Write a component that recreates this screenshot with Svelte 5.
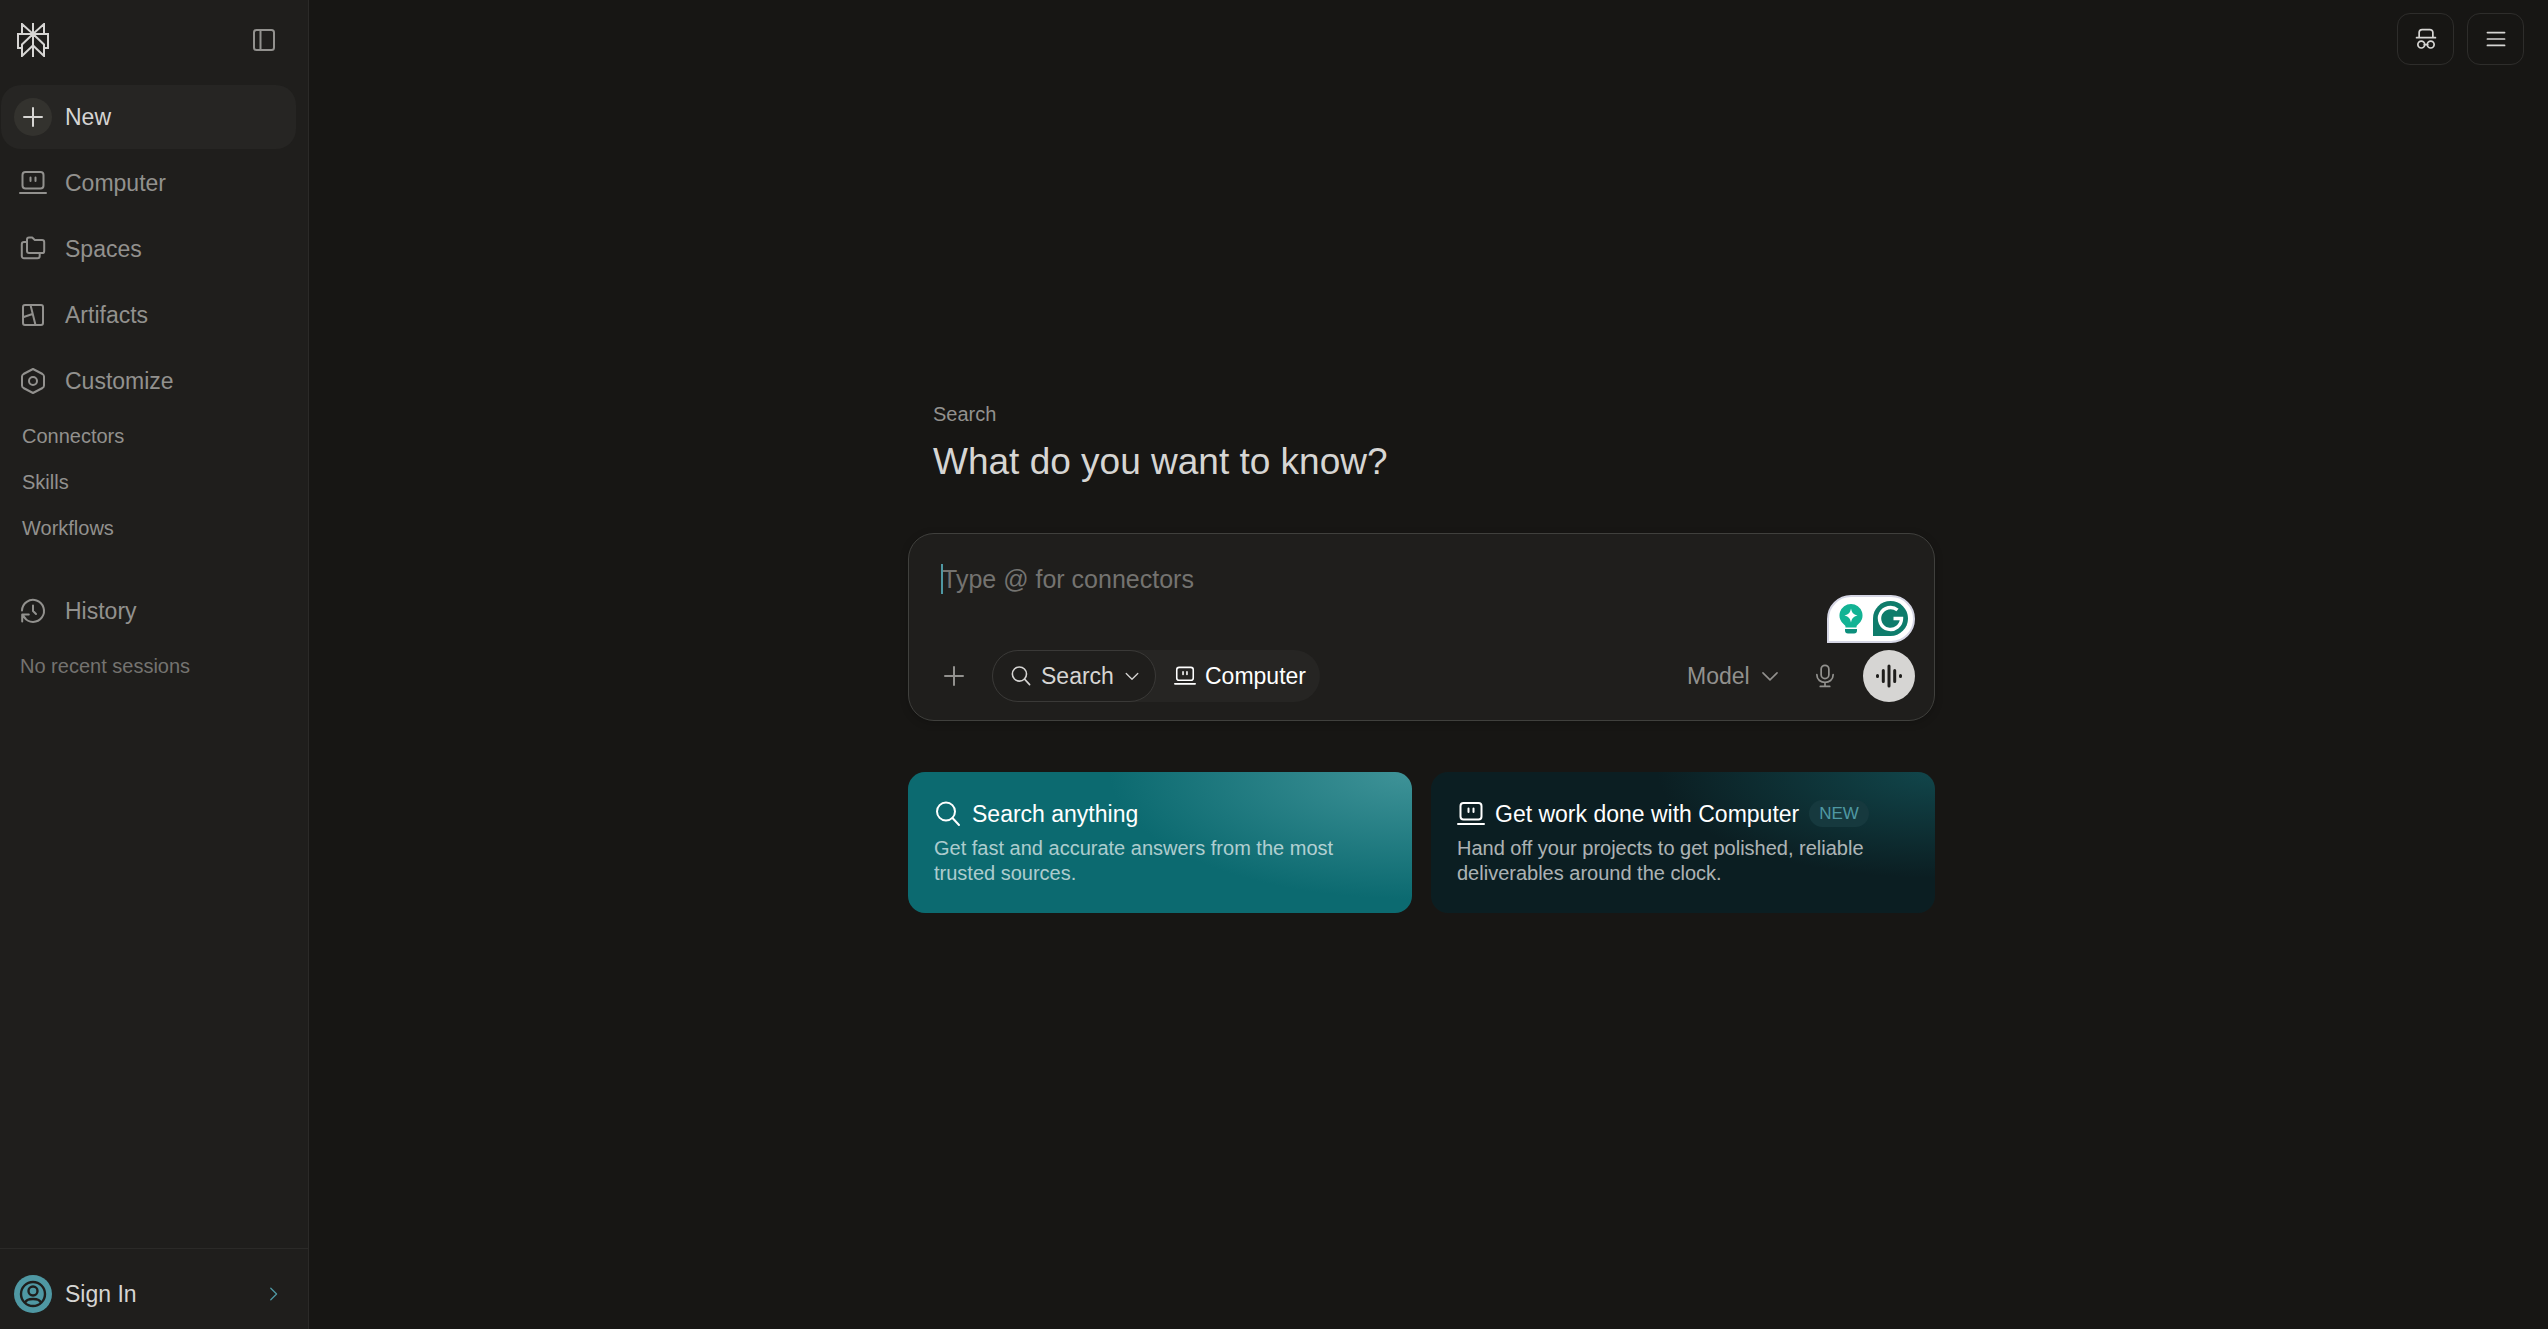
<script>
    const navItems = [
        { label: 'New', icon: 'plus', active: true },
        { label: 'Computer', icon: 'computer' },
        { label: 'Spaces', icon: 'spaces' },
        { label: 'Artifacts', icon: 'artifacts' },
        { label: 'Customize', icon: 'customize' }
    ];
    const subItems = ['Connectors', 'Skills', 'Workflows'];

    const cards = [
        {
            kind: 'search',
            icon: 'search',
            title: 'Search anything',
            text: 'Get fast and accurate answers from the most trusted sources.'
        },
        {
            kind: 'computer',
            icon: 'computer',
            title: 'Get work done with Computer',
            text: 'Hand off your projects to get polished, reliable deliverables around the clock.',
            badge: 'NEW'
        }
    ];

    let query = $state('');
    let mode = $state('Search');
    let model = $state('Model');
</script>

{#snippet icon(name, size = 28)}
    <svg class="icon" width={size} height={size} viewBox="0 0 28 28" aria-hidden="true">
        {#if name === 'plus'}
            <path d="M14 5v18M5 14h18" />
        {:else if name === 'computer'}
            <rect x="3.5" y="3" width="21" height="16.5" rx="3" />
            <path d="M1 24h26M11.5 8.5v3.5M16.5 8.5v3.5" />
        {:else if name === 'spaces'}
            <path d="M8 4.500a2 2 0 0 1 2-2h3.200l2.600 2.400H23a2.200 2.200 0 0 1 2.200 2.200v8.800a2.200 2.200 0 0 1-2.200 2.200H10a2 2 0 0 1-2-2z" />
            <path d="M8 7H5a2.200 2.200 0 0 0-2.200 2.200V21A2.200 2.200 0 0 0 5 23.300h13.500a2.200 2.200 0 0 0 2.200-2.200v-3" />
        {:else if name === 'artifacts'}
            <rect x="4" y="4" width="20" height="20" rx="2" />
            <path d="M11.500 4l5 20M4 16.200l9.500-3.200" />
        {:else if name === 'customize'}
            <path d="M14 2l9.500 5a3 3 0 0 1 1.500 2.500v9a3 3 0 0 1-1.500 2.500L14 26l-9.500-5A3 3 0 0 1 3 18.500v-9A3 3 0 0 1 4.500 7z" />
            <circle cx="14" cy="14" r="4" />
        {:else if name === 'history'}
            <path d="M3 13.500A11 11 0 1 1 5.200 20.500M3.200 24.500V17.500H9.800M3.500 17.800l3.300 4M14 8.500V14l3 3" />
        {:else if name === 'search'}
            <circle cx="12" cy="11.500" r="9" />
            <path d="M18.500 18L25 25" />
        {:else if name === 'chevron-down'}
            <path d="M5 10l9 9 9-9" />
        {:else if name === 'chevron-right'}
            <path d="M9 5l9 9-9 9" />
        {:else if name === 'panel'}
            <rect x="4" y="4" width="20" height="20" rx="2.500" />
            <path d="M10.500 4v20" />
        {:else if name === 'incognito'}
            <path d="M3 12.500h22M6 12.500V6.500A3.500 3.500 0 0 1 9.500 3h9A3.500 3.500 0 0 1 22 6.500v6M12 20.500h4" />
            <circle cx="8.500" cy="20.500" r="4" />
            <circle cx="19.500" cy="20.500" r="4" />
        {:else if name === 'menu'}
            <path d="M4 6.500h20M4 14h20M4 21.500h20" />
        {:else if name === 'mic'}
            <rect x="9.500" y="1.500" width="9" height="15.500" rx="4.500" />
            <path d="M4.500 12.500C4.500 24.500 23.500 24.500 23.500 12.500M14 21.500v4.500M8.500 26.200h11" />
        {/if}
    </svg>
{/snippet}

<div class="page">
    <aside class="sidebar">
        <div class="brand">
            <a class="logo" href="#home" aria-label="Home">
                <svg width="32" height="34" viewBox="0 0 32 34" aria-hidden="true">
                    <path d="M16 0v34M5 11V1l11 10L27 1v10M5 25H1V11h30v14h-4M16 11L5 21.500V33l11-10.500L27 33V21.500z" />
                </svg>
            </a>
            <button class="collapse" aria-label="Collapse sidebar">{@render icon('panel')}</button>
        </div>

        <nav class="nav">
            {#each navItems as item}
                <a class="nav-item" class:active={item.active} href="#{item.label}">
                    <span class="nav-icon">{@render icon(item.icon)}</span>
                    {item.label}
                </a>
            {/each}
        </nav>
        <nav class="sub-nav" aria-label="Customize">
            {#each subItems as item}
                <a href="#{item}">{item}</a>
            {/each}
        </nav>

        <section class="history">
            <a class="nav-item" href="#history">
                <span class="nav-icon">{@render icon('history')}</span>
                History
            </a>
            <p>No recent sessions</p>
        </section>

        <div class="account">
            <button class="sign-in">
                <span class="avatar">
                    <svg width="28" height="28" viewBox="0 0 28 28" aria-hidden="true">
                        <circle cx="14" cy="14" r="12" />
                        <circle cx="14" cy="11" r="4.500" />
                        <path d="M6.500 22.500c.5-3 3.500-3.500 7.500-3.500s7 .5 7.500 3.500" />
                    </svg>
                </span>
                Sign In
                <span class="go">{@render icon('chevron-right', 18)}</span>
            </button>
        </div>
    </aside>

    <main class="main">
        <header class="topbar">
            <button aria-label="Incognito">{@render icon('incognito', 24)}</button>
            <button aria-label="Menu">{@render icon('menu', 24)}</button>
        </header>

        <div class="center">
            <div class="content">
                <div class="intro">
                    <p>Search</p>
                    <h1>What do you want to know?</h1>
                </div>

                <form class="composer" onsubmit={(e) => e.preventDefault()}>
                    <div class="field">
                        <span class="caret"></span>
                        <textarea rows="1" placeholder="Type @ for connectors" aria-label="Ask anything" bind:value={query}></textarea>
                    </div>

                    <div class="toolbar">
                        <button type="button" class="add" aria-label="Add files">{@render icon('plus')}</button>
                        <div class="modes">
                            <label class="mode">
                                {@render icon('search', 22)}
                                <select aria-label="Mode" bind:value={mode}>
                                    <option>Search</option>
                                </select>
                                {@render icon('chevron-down', 18)}
                            </label>
                            <button type="button" class="computer">
                                {@render icon('computer', 22)}
                                Computer
                            </button>
                        </div>

                        <label class="model">
                            <select aria-label="Model" bind:value={model}>
                                <option>Model</option>
                            </select>
                            {@render icon('chevron-down', 22)}
                        </label>
                        <button type="button" class="mic" aria-label="Dictate">{@render icon('mic', 24)}</button>
                        <button type="button" class="voice" aria-label="Voice mode">
                            <svg width="28" height="28" viewBox="0 0 28 28" aria-hidden="true">
                                <path d="M2.500 13.500v1M8.300 8.500v11M14 4v20M19.700 8.500v11M25.500 13.500v1" />
                            </svg>
                        </button>
                    </div>

                    <!-- writing assistant, floats over the composer -->
                    <div class="assistant">
                        <svg width="24" height="30" viewBox="0 0 24 30" aria-hidden="true">
                            <path fill="#12b394" d="M12 0a11.500 11.500 0 0 0-6.500 21c1 .7 1 1.500 1 2.500h11c0-1 0-1.800 1-2.500A11.500 11.500 0 0 0 12 0z" />
                            <path fill="#0c8f7c" d="M6 25h12v1.500a3 3 0 0 1-3 3H9a3 3 0 0 1-3-3z" />
                            <path fill="#fff" d="M12 4.500c1 4.500 2 5.500 6.500 7-4.500 1.500-5.500 2.500-6.500 7-1-4.500-2-5.500-6.500-7 4.500-1.500 5.500-2.500 6.500-7z" />
                        </svg>
                        <svg width="35" height="35" viewBox="0 0 35 35" aria-hidden="true">
                            <path fill="#0e7c6b" d="M0 35V17.500A17.500 17.500 0 1 1 17.500 35z" />
                            <path class="g-mark" d="M24.500 9A11 11 0 1 0 28.500 17.500H20.500" />
                        </svg>
                    </div>
                </form>

                <div class="cards">
                    {#each cards as card}
                        <button class="card {card.kind}">
                            <span class="card-title">
                                {@render icon(card.icon)}
                                {card.title}
                                {#if card.badge}
                                    <span class="badge">{card.badge}</span>
                                {/if}
                            </span>
                            <span class="card-text">{card.text}</span>
                        </button>
                    {/each}
                </div>
            </div>
        </div>
    </main>
</div>

<style>
    :global(body) {
        background: #171614;
    }

    .page {
        display: flex;
        min-height: 100vh;
        color: #d6d5d3;
        font-family: 'Liberation Sans', Arial, sans-serif;
        font-size: 23px;
        line-height: 32px;
    }

    .page :is(button, select, textarea) {
        padding: 0;
        border: 0;
        background: none;
        color: inherit;
        font: inherit;
        appearance: none;
        outline: none;
    }

    .page a {
        color: inherit;
        text-decoration: none;
    }

    .page :is(p, h1) {
        margin: 0;
    }

    .page svg {
        display: block;
        flex-shrink: 0;
    }

    .icon {
        fill: none;
        stroke: currentColor;
        stroke-width: 2;
        stroke-linecap: round;
        stroke-linejoin: round;
    }

    /* Sidebar */
    .sidebar {
        display: flex;
        flex-direction: column;
        box-sizing: border-box;
        width: 309px;
        flex-shrink: 0;
        background: #1f1e1c;
        border-right: 1px solid #2b2a28;
        color: #92918e;
    }

    .brand {
        display: flex;
        align-items: center;
        justify-content: space-between;
        height: 79px;
        padding: 0 30px 0 17px;
        margin-bottom: 6px;
    }

    .logo path {
        fill: none;
        stroke: #d6d5d3;
        stroke-width: 2;
    }

    .nav {
        display: grid;
        gap: 2px;
    }

    .nav-item {
        display: flex;
        align-items: center;
        gap: 13px;
        height: 64px;
        margin: 0 12px 0 1px;
        padding: 0 13px;
        border-radius: 20px;
    }

    .nav-icon {
        display: grid;
        place-items: center;
        width: 38px;
        height: 38px;
        border-radius: 50%;
    }

    .nav-item.active {
        background: #262523;
        color: #d6d5d3;
    }

    .nav-item.active .nav-icon {
        background: #33322e;
    }

    .sub-nav {
        display: grid;
        font-size: 20px;
        line-height: 46px;
    }

    .sub-nav a {
        padding-left: 22px;
    }

    .history {
        margin-top: 28px;
    }

    .history p {
        padding-left: 20px;
        color: #747370;
        font-size: 20px;
        line-height: 46px;
    }

    .account {
        margin-top: auto;
        border-top: 1px solid #2b2a28;
    }

    .page .sign-in {
        display: flex;
        align-items: center;
        gap: 13px;
        width: 100%;
        height: 80px;
        padding: 10px 25px 0 14px;
        color: #d6d5d3;
    }

    .avatar {
        display: grid;
        place-items: center;
        width: 38px;
        height: 38px;
        border-radius: 50%;
        background: #4f98a3;
    }

    .avatar svg {
        fill: none;
        stroke: #1f1e1c;
        stroke-width: 2.4;
    }

    .go {
        margin-left: auto;
        color: #4f98a3;
    }

    /* Main column */
    .main {
        display: flex;
        flex: 1;
        flex-direction: column;
        min-width: 0;
    }

    .topbar {
        display: flex;
        justify-content: flex-end;
        gap: 13px;
        padding: 13px 24px;
    }

    .page .topbar button {
        display: grid;
        place-items: center;
        width: 57px;
        height: 52px;
        border: 1px solid #2e2d2b;
        border-radius: 13px;
    }

    .center {
        display: flex;
        flex: 1;
        align-items: center;
        justify-content: center;
        padding: 0 14px 94px 0;
    }

    .content {
        width: 100%;
        max-width: 1027px;
    }

    .intro {
        padding: 0 25px;
        margin-bottom: 46px;
    }

    .intro p {
        color: #92918e;
        font-size: 20px;
        line-height: 26px;
    }

    .intro h1 {
        margin-top: 10px;
        font-size: 37px;
        font-weight: 400;
        line-height: 50px;
    }

    .composer {
        position: relative;
        padding: 24px 19px 18px;
        border: 1px solid #40403d;
        border-radius: 26px;
        background: #1f1e1c;
        box-shadow: 0 2px 8px rgba(0, 0, 0, 0.2);
    }

    .field {
        position: relative;
        padding: 4px 14px 0;
    }

    .caret {
        position: absolute;
        left: 13px;
        top: 6px;
        width: 2px;
        height: 30px;
        background: #4f98a3;
    }

    .page textarea {
        display: block;
        width: 100%;
        height: 88px;
        font-size: 25px;
        line-height: 34px;
        resize: none;
    }

    textarea::placeholder {
        color: #747370;
        opacity: 1;
    }

    .toolbar {
        display: flex;
        align-items: center;
    }

    .page .add {
        display: grid;
        place-items: center;
        width: 52px;
        height: 52px;
        color: #92918e;
    }

    .modes {
        display: flex;
        height: 52px;
        margin-left: 12px;
        border-radius: 26px;
        background: #262523;
    }

    .mode {
        display: flex;
        align-items: center;
        box-sizing: border-box;
        gap: 9px;
        padding: 0 14px 0 17px;
        border: 1px solid #3a3937;
        border-radius: 26px;
        background: #1f1e1c;
    }

    .page .computer {
        display: flex;
        align-items: center;
        gap: 9px;
        padding: 0 14px 0 18px;
        color: #fff;
    }

    .model {
        display: flex;
        align-items: center;
        gap: 9px;
        margin-left: auto;
        color: #92918e;
    }

    .page .mic {
        display: grid;
        place-items: center;
        width: 52px;
        height: 52px;
        margin: 0 12px 0 18px;
        color: #92918e;
    }

    .page .voice {
        display: grid;
        place-items: center;
        width: 52px;
        height: 52px;
        border-radius: 50%;
        background: #d6d5d3;
    }

    .voice path {
        stroke: #1f1e1c;
        stroke-width: 3;
        stroke-linecap: round;
    }

    .assistant {
        position: absolute;
        right: 19px;
        top: 61px;
        display: flex;
        align-items: center;
        gap: 10px;
        box-sizing: border-box;
        height: 48px;
        padding: 0 5px 0 10px;
        border: 2px solid #d5d6e4;
        border-radius: 24px 24px 24px 0;
        background: #fff;
    }

    .g-mark {
        fill: none;
        stroke: #fff;
        stroke-width: 3.4;
    }

    /* Suggestion cards */
    .cards {
        display: grid;
        grid-template-columns: 1fr 1fr;
        gap: 19px;
        margin-top: 51px;
    }

    .page .card {
        padding: 26px 26px 27px;
        border-radius: 17px;
        text-align: left;
    }

    .page .card.search {
        background: radial-gradient(ellipse 60% 90% at 100% 0, #3f9398, #0c6a70);
    }

    .page .card.computer {
        display: block;
        background: radial-gradient(ellipse 55% 75% at 100% 0, #11464b, #0b1e22);
    }

    .card-title {
        display: flex;
        align-items: center;
        gap: 10px;
        margin-bottom: 6px;
        color: #fff;
    }

    .card-text {
        display: block;
        color: rgba(255, 255, 255, 0.68);
        font-size: 20px;
        line-height: 25px;
    }

    .badge {
        padding: 0 10px;
        border-radius: 14px;
        background: #16393e;
        color: #4f98a3;
        font-size: 17px;
        line-height: 27px;
    }
</style>
